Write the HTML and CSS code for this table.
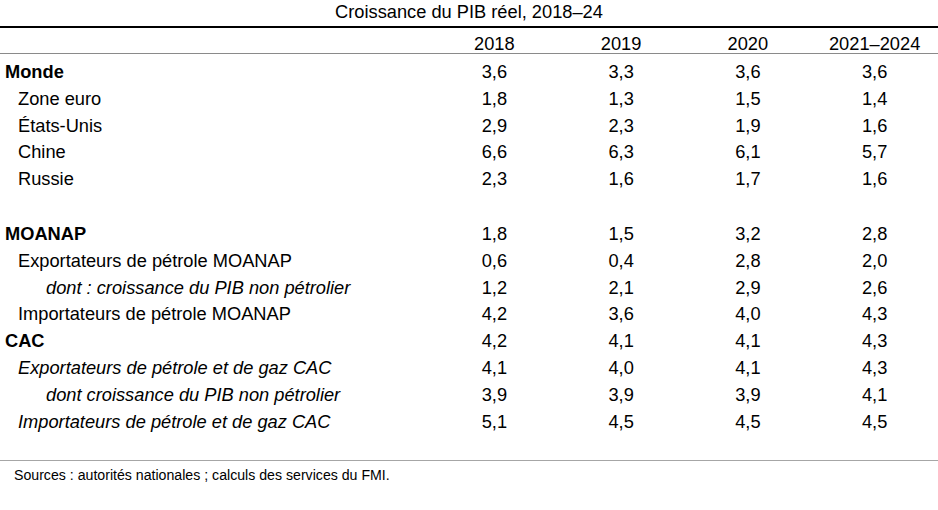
FILE: index.html
```html
<!DOCTYPE html>
<html lang="fr">
<head>
<meta charset="utf-8">
<title>Croissance du PIB réel, 2018–24</title>
<link rel="stylesheet" href="styles.css">
</head>
<body>
<div class="table">
  <div class="title">Croissance du PIB réel, 2018–24</div>
  <div class="row head">
    <div class="label"></div>
    <div class="num">2018</div>
    <div class="num">2019</div>
    <div class="num">2020</div>
    <div class="num">2021–2024</div>
  </div>
  <div class="body">
    <div class="row"><div class="label lvl0 bold">Monde</div><div class="num">3,6</div><div class="num">3,3</div><div class="num">3,6</div><div class="num">3,6</div></div>
    <div class="row"><div class="label lvl1">Zone euro</div><div class="num">1,8</div><div class="num">1,3</div><div class="num">1,5</div><div class="num">1,4</div></div>
    <div class="row"><div class="label lvl1">États-Unis</div><div class="num">2,9</div><div class="num">2,3</div><div class="num">1,9</div><div class="num">1,6</div></div>
    <div class="row"><div class="label lvl1">Chine</div><div class="num">6,6</div><div class="num">6,3</div><div class="num">6,1</div><div class="num">5,7</div></div>
    <div class="row"><div class="label lvl1">Russie</div><div class="num">2,3</div><div class="num">1,6</div><div class="num">1,7</div><div class="num">1,6</div></div>
    <div class="row empty"><div class="label"></div></div>
    <div class="row"><div class="label lvl0 bold">MOANAP</div><div class="num">1,8</div><div class="num">1,5</div><div class="num">3,2</div><div class="num">2,8</div></div>
    <div class="row"><div class="label lvl1">Exportateurs de pétrole MOANAP</div><div class="num">0,6</div><div class="num">0,4</div><div class="num">2,8</div><div class="num">2,0</div></div>
    <div class="row"><div class="label lvl2 ital">dont : croissance du PIB non pétrolier</div><div class="num">1,2</div><div class="num">2,1</div><div class="num">2,9</div><div class="num">2,6</div></div>
    <div class="row"><div class="label lvl1">Importateurs de pétrole MOANAP</div><div class="num">4,2</div><div class="num">3,6</div><div class="num">4,0</div><div class="num">4,3</div></div>
    <div class="row"><div class="label lvl0 bold">CAC</div><div class="num">4,2</div><div class="num">4,1</div><div class="num">4,1</div><div class="num">4,3</div></div>
    <div class="row"><div class="label lvl1 ital">Exportateurs de pétrole et de gaz CAC</div><div class="num">4,1</div><div class="num">4,0</div><div class="num">4,1</div><div class="num">4,3</div></div>
    <div class="row"><div class="label lvl2 ital">dont croissance du PIB non pétrolier</div><div class="num">3,9</div><div class="num">3,9</div><div class="num">3,9</div><div class="num">4,1</div></div>
    <div class="row"><div class="label lvl1 ital">Importateurs de pétrole et de gaz CAC</div><div class="num">5,1</div><div class="num">4,5</div><div class="num">4,5</div><div class="num">4,5</div></div>
  </div>
  <div class="source">Sources : autorités nationales ; calculs des services du FMI.</div>
</div>
</body>
</html>
```

FILE: styles.css
```css
html, body {
  margin: 0;
  padding: 0;
  background: #ffffff;
}

body {
  font-family: "Liberation Sans", Arial, sans-serif;
  color: #000000;
  width: 938px;
}

.table {
  width: 938px;
}

.title {
  font-size: 18.25px;
  line-height: 24px;
  text-align: center;
  padding-bottom: 2px;
  border-bottom: 2px solid #000000;
}

.row {
  display: grid;
  grid-template-columns: 431px repeat(4, 1fr);
  font-size: 18.25px;
  line-height: 26.8px;
  height: 26.8px;
}

.row.empty {
  height: 28px;
}

.row.head {
  padding-top: 6px;
  line-height: 19px;
  height: 19px;
  border-bottom: 1px solid #8a8a8a;
}

.body {
  padding-top: 5px;
  padding-bottom: 25px;
  border-bottom: 1px solid #a6a6a6;
}

.num {
  text-align: center;
}

.label {
  white-space: nowrap;
}

.lvl0 {
  padding-left: 5px;
}

.lvl1 {
  padding-left: 18px;
}

.lvl2 {
  padding-left: 46px;
}

.bold {
  font-weight: bold;
}

.ital {
  font-style: italic;
}

.source {
  font-size: 14.15px;
  line-height: 16px;
  padding-top: 6px;
  padding-left: 14px;
}
```
